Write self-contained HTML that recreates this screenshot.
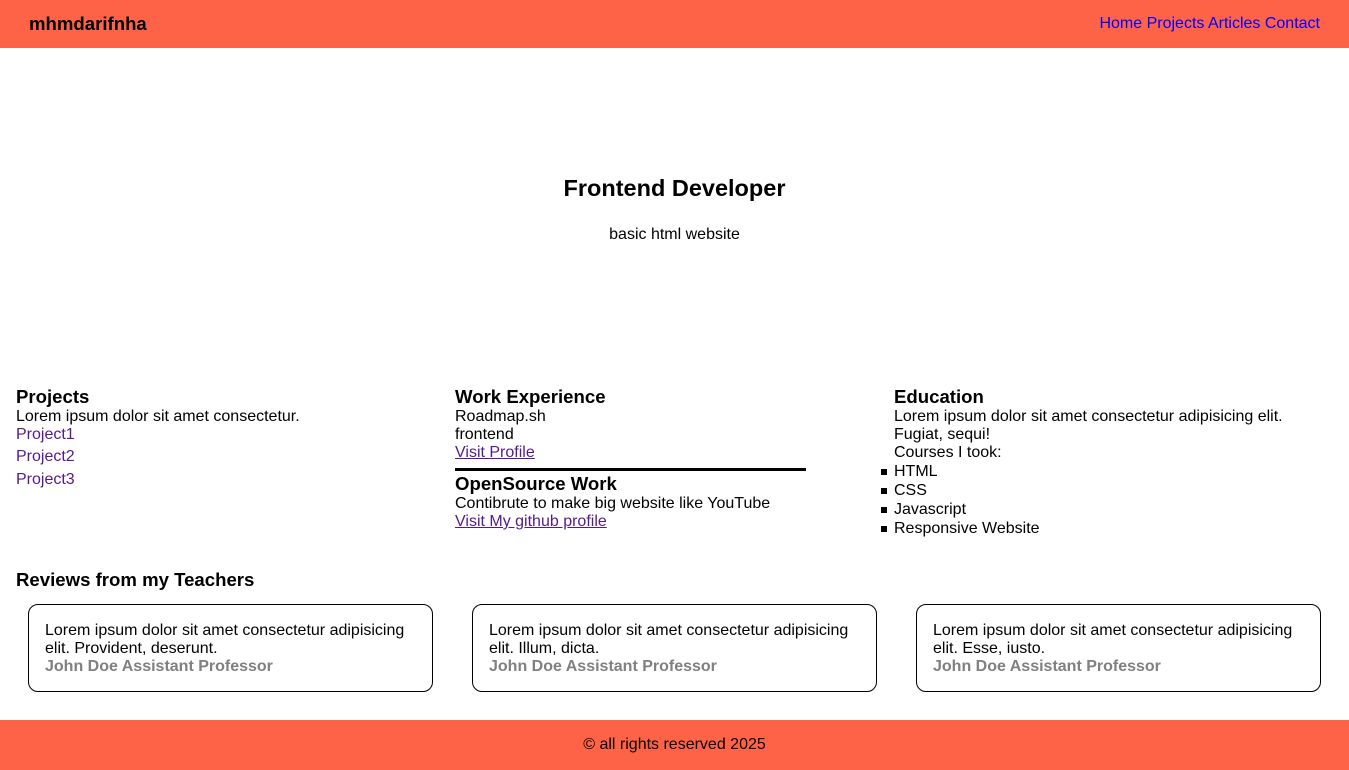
<!DOCTYPE html>
<html><head><meta charset="utf-8"><style>
*{margin:0;padding:0;box-sizing:border-box}
body{width:1349px;height:770px;position:relative;font-family:"Liberation Sans",Arial,sans-serif;font-size:16px;color:#000;background:#fff;overflow:hidden}
.a{position:absolute;white-space:nowrap;line-height:18px}
header{position:absolute;left:0;top:0;width:1349px;height:48px;background:#ff6347}
footer{position:absolute;left:0;top:720px;width:1349px;height:50px;background:#ff6347}
.b{font-weight:bold;font-size:18.6px;line-height:20px}
.l{color:#551a8b}
.u{color:#551a8b;text-decoration:underline}
.card{position:absolute;top:604px;width:405px;height:88px;border:1px solid #000;border-radius:10px}
.card div{position:absolute;left:16px;top:17px;line-height:18px;white-space:nowrap}
.g{color:#808080;font-weight:bold}
.sq{position:absolute;left:881px;width:6px;height:6px;background:#000}
</style></head><body>
<header>
<div class="a b" style="left:29px;top:14px">mhmdarifnha</div>
<div class="a" style="right:29px;top:15px;color:#00f">Home Projects Articles Contact</div>
</header>
<div class="a" style="left:0;width:1349px;text-align:center;top:174px;font-size:23.5px;font-weight:bold;line-height:28px">Frontend Developer</div>
<div class="a" style="left:0;width:1349px;text-align:center;top:226px">basic html website</div>

<div class="a b" style="left:16px;top:387px">Projects</div>
<div class="a" style="left:16px;top:408px">Lorem ipsum dolor sit amet consectetur.</div>
<div class="a l" style="left:16px;top:426px">Project1</div>
<div class="a l" style="left:16px;top:448px">Project2</div>
<div class="a l" style="left:16px;top:471px">Project3</div>

<div class="a b" style="left:455px;top:387px">Work Experience</div>
<div class="a" style="left:455px;top:408px">Roadmap.sh</div>
<div class="a" style="left:455px;top:426px">frontend</div>
<div class="a u" style="left:455px;top:444px">Visit Profile</div>
<div style="position:absolute;left:455px;top:468px;width:351px;height:3px;background:#000"></div>
<div class="a b" style="left:455px;top:474px">OpenSource Work</div>
<div class="a" style="left:455px;top:495px">Contibrute to make big website like YouTube</div>
<div class="a u" style="left:455px;top:513px">Visit My github profile</div>

<div class="a b" style="left:894px;top:387px">Education</div>
<div class="a" style="left:894px;top:408px">Lorem ipsum dolor sit amet consectetur adipisicing elit.</div>
<div class="a" style="left:894px;top:426px">Fugiat, sequi!</div>
<div class="a" style="left:894px;top:444px">Courses I took:</div>
<div class="a" style="left:894px;top:463px">HTML</div><div class="sq" style="top:469px"></div>
<div class="a" style="left:894px;top:482px">CSS</div><div class="sq" style="top:488px"></div>
<div class="a" style="left:894px;top:501px">Javascript</div><div class="sq" style="top:507px"></div>
<div class="a" style="left:894px;top:520px">Responsive Website</div><div class="sq" style="top:526px"></div>

<div class="a b" style="left:16px;top:570px">Reviews from my Teachers</div>
<div class="card" style="left:28px"><div>Lorem ipsum dolor sit amet consectetur adipisicing<br>elit. Provident, deserunt.<br><span class="g">John Doe Assistant Professor</span></div></div>
<div class="card" style="left:472px"><div>Lorem ipsum dolor sit amet consectetur adipisicing<br>elit. Illum, dicta.<br><span class="g">John Doe Assistant Professor</span></div></div>
<div class="card" style="left:916px"><div>Lorem ipsum dolor sit amet consectetur adipisicing<br>elit. Esse, iusto.<br><span class="g">John Doe Assistant Professor</span></div></div>

<footer><div class="a" style="left:0;width:1349px;text-align:center;top:16px">© all rights reserved 2025</div></footer>
</body></html>
